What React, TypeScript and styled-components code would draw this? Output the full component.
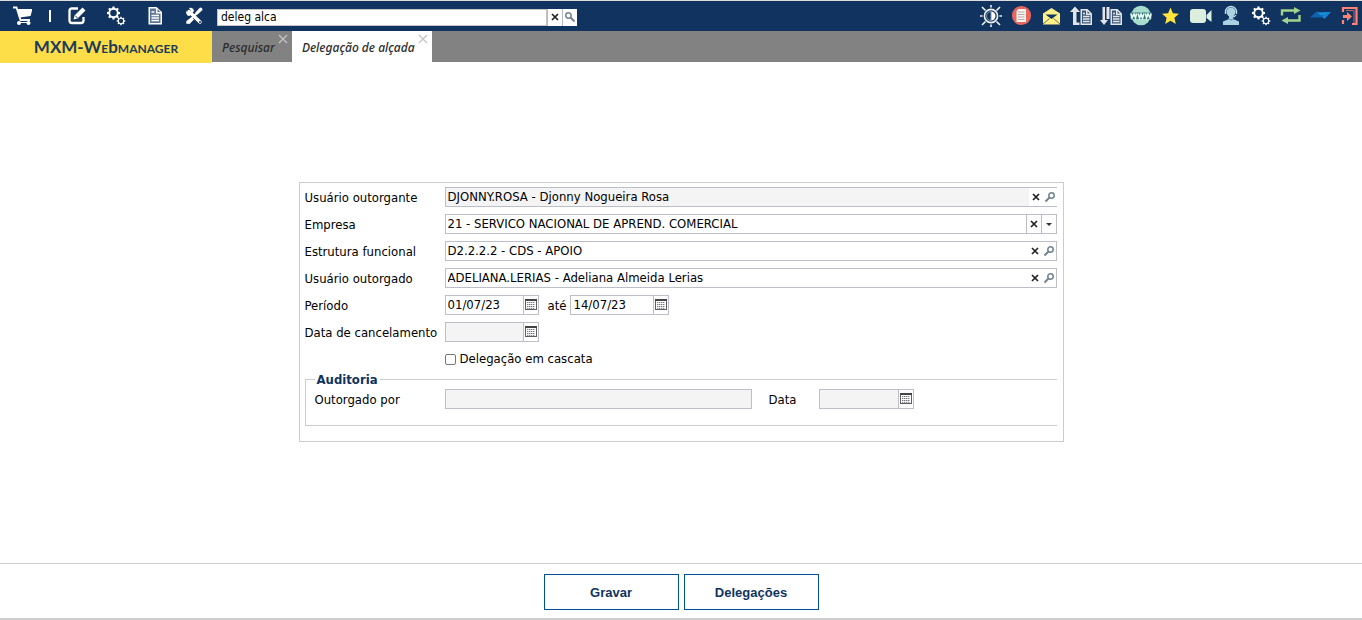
import React, { useState } from 'react';
import styled, { createGlobalStyle, css } from 'styled-components';

const NAVY = '#10335f';
const FORM_FONT = "'DejaVu Sans Condensed', 'DejaVu Sans', sans-serif";

const GlobalStyle = createGlobalStyle`
  *, *::before, *::after { box-sizing: border-box; }
  body { margin: 0; background: #fff; color: #000; font: 13px/20px ${FORM_FONT}; }
  button, input { font: inherit; color: inherit; margin: 0; }
  button { cursor: pointer; }
`;

const Page = styled.div`
  display: flex;
  flex-direction: column;
  min-height: 100vh;
`;

const TopBar = styled.header`
  display: flex;
  align-items: center;
  height: 31px;
  border-top: 1px solid #dcdcdc;
  background: ${NAVY};
`;

const MainTools = styled.nav`
  display: flex;
  align-items: center;
  gap: 17px;
  padding: 0 12px;
`;

const StatusTools = styled.nav`
  display: flex;
  gap: 8px;
  margin-left: auto;
`;

const ToolButton = styled.button`
  display: flex;
  align-items: center;
  justify-content: center;
  width: 22px;
  height: 22px;
  padding: 0;
  border: 0;
  background: none;
`;

const Divider = styled.span`
  width: 2px;
  height: 12px;
  margin: 0 -2px;
  background: #fff;
`;

const SearchBox = styled.form`
  display: flex;
  width: 360px;
  height: 17px;
  margin-top: 2px;
`;

const SearchInput = styled.input`
  flex: 1;
  min-width: 0;
  height: 17px;
  padding: 0 3px;
  border: 1px solid #c5c5c5;
  background: #fff;
  font-size: 12px;
  line-height: 15px;
`;

const SearchButton = styled.button`
  display: flex;
  align-items: center;
  justify-content: center;
  width: 15px;
  padding: 0;
  border: 0;
  border-left: 1px solid #b4b8d0;
  background: #fff;
`;

const TabBar = styled.div`
  display: flex;
  align-items: flex-start;
  height: 32px;
`;

const Brand = styled.a`
  display: flex;
  align-items: center;
  justify-content: center;
  width: 212px;
  height: 32px;
  background: #fddd48;
  color: #1c3c5c;
  font: bold 17px/32px Lato, sans-serif;
  font-variant-caps: small-caps;
  text-decoration: none;
`;

const BrandLower = styled.span`
  font-variant-caps: normal;
`;

const Tabs = styled.div`
  display: flex;
  flex: 1;
  height: 31px;
  background: #828282;
`;

const Tab = styled.div<{ $active?: boolean }>`
  display: flex;
  gap: 3px;
  padding: 0 4px 0 10px;
  background: ${p => (p.$active ? '#fff' : 'transparent')};
`;

const TabLabel = styled.button`
  padding: 2px 0 0;
  border: 0;
  background: none;
  color: #2b2b2b;
  font: italic 500 12px/28px 'Noto Sans', sans-serif;
`;

const TabClose = styled.button`
  display: flex;
  width: 10px;
  height: 10px;
  margin-top: 3px;
  padding: 0;
  border: 0;
  background: none;
`;

const Main = styled.main`
  display: flex;
  flex: 1;
  align-items: center;
  justify-content: center;
  padding-bottom: 2px;
`;

const Panel = styled.form`
  display: flex;
  flex-direction: column;
  width: 765px;
  max-width: 100%;
  padding: 4px 6px 15px 5px;
  border: 1px solid #ccc;
`;

const Rows = styled.div`
  display: flex;
  flex-direction: column;
  gap: 7px;
`;

const Row = styled.div`
  display: flex;
  height: 20px;
`;

const Label = styled.label<{ $width: number }>`
  flex: none;
  width: ${p => p.$width}px;
  height: 20px;
  line-height: 22px;
  white-space: nowrap;
`;

const Field = styled.div<{ $open?: boolean; $width?: number }>`
  display: flex;
  ${p => (p.$width ? css`flex: none; width: ${p.$width}px;` : css`flex: 1;`)}
  height: 20px;
  border: 1px solid #bcbec8;
  ${p => p.$open && css`border-right: 0;`}
  background: #fff;
`;

const FieldInput = styled.input<{ $readOnly?: boolean }>`
  flex: 1;
  min-width: 0;
  height: 18px;
  padding: 0 2px;
  border: 0;
  background: ${p => (p.$readOnly ? '#f4f4f4' : '#fff')};
  line-height: 18px;
`;

const FieldButton = styled.button<{ $divided?: boolean }>`
  display: flex;
  align-items: center;
  justify-content: center;
  width: ${p => (p.$divided ? 15 : 14)}px;
  padding: 0;
  border: 0;
  ${p => p.$divided && css`border-left: 1px solid #bcbec8;`}
  background: #fff;
`;

const CheckLabel = styled.label`
  display: flex;
  align-items: center;
  gap: 4px;
  margin-left: 140px;
`;

const Check = styled.input`
  appearance: none;
  width: 11px;
  height: 11px;
  border: 1px solid #767676;
  border-radius: 2px;
  background: #fff;
  &:checked { background: ${NAVY}; }
`;

const Between = styled.span`
  padding: 0 4px 0 9px;
  line-height: 22px;
`;

const Audit = styled.fieldset`
  display: flex;
  min-width: 0;
  margin: 0;
  padding: 0 0 16px 9px;
  border: 1px solid #ccc;
  border-right: 0;
`;

const Legend = styled.legend`
  height: 20px;
  padding: 0 2px;
  color: #10335f;
  font-weight: bold;
  line-height: 22px;
`;

const AuditDate = styled.div`
  display: flex;
  margin-left: 17px;
`;

const Footer = styled.footer`
  display: flex;
  justify-content: center;
  gap: 5px;
  padding: 10px 0 8px;
  border-top: 1px solid #ccc;
  border-bottom: 2px solid #ccc;
`;

const ActionButton = styled.button`
  width: 135px;
  height: 36px;
  padding: 2px 0 0;
  border: 1px solid #005294;
  background: #fff;
  color: #10335f;
  font: bold 13px/16px 'Liberation Sans', Arial, sans-serif;
`;

const gearPath = (cx: number, cy: number, r: number, teeth: number) => {
  const pts: string[] = [];
  for (let i = 0; i < teeth; i++) {
    [[-0.3, 0.78], [-0.2, 1], [0.2, 1], [0.3, 0.78]].forEach(([o, k]) => {
      const a = ((i + o) * 2 * Math.PI) / teeth;
      pts.push(`${(cx + Math.cos(a) * r * k).toFixed(2)} ${(cy + Math.sin(a) * r * k).toFixed(2)}`);
    });
  }
  const h = r * 0.5;
  return `M${pts.join('L')}ZM${cx - h} ${cy}a${h} ${h} 0 1 0 ${2 * h} 0a${h} ${h} 0 1 0 ${-2 * h} 0Z`;
};

const Svg = ({ children, size = 22 }: { children: React.ReactNode; size?: number }) => (
  <svg width={size} height={size} viewBox={`0 0 ${size} ${size}`} aria-hidden="true">{children}</svg>
);

const CartIcon = () => (
  <Svg>
    <path d="M1 2.500h3.500l4 12.500H18" fill="none" stroke="#fff" strokeWidth="1.800" />
    <path d="M5 4h15v2l-1.500 5L8 12.500z" fill="#fff" />
    <circle cx="7" cy="18" r="2" fill="#fff" />
    <circle cx="16.500" cy="18" r="2" fill="#fff" />
    <path d="M7 17.500h9" stroke="#fff" />
  </Svg>
);
const EditIcon = () => (
  <Svg>
    <path d="M12 3.500H6q-2.500 0-2.500 2.500v9.500q0 2.500 2.500 2.500h9q2.500 0 2.500-2.500V12" fill="none" stroke="#fff" strokeWidth="2.300" />
    <path d="M7.500 14.500l1-4L16.500 2.600l3 3L11.500 13.500z" fill="#fff" />
    <path d="M9 10.500l2.500 2.500" stroke={NAVY} />
  </Svg>
);
const GearsIcon = () => (
  <Svg>
    <path fill="#fff" fillRule="evenodd" d={gearPath(8.5, 8, 6.6, 8)} />
    <path fill="#fff" fillRule="evenodd" d={gearPath(16, 16, 4.3, 8)} />
  </Svg>
);
const PageIcon = () => (
  <Svg>
    <path d="M4.500 2h8l5.500 5v12.500H4.500z" fill="#fff" />
    <path d="M6 3.500h6v5h4.500V18H6zM13.500 4v3h3z" fill="#5d7594" />
    <path d="M7.500 7h3M7.500 10.500h7.500M7.500 13h7.500M7.500 15.500h7.500" stroke="#fff" strokeWidth="1.500" />
  </Svg>
);
const ToolsIcon = () => (
  <Svg>
    <path d="M6 6.500l11 10.500" stroke="#fff" strokeWidth="3.400" strokeLinecap="round" />
    <path d="M3 6l3 2 2-2-2-3q4-1 5 3l-4.500 5Q3 11 3 6z" fill="#fff" />
    <path d="M19 3l-2-.5-5 5.500 2 2 5.500-5z" fill="#fff" />
    <path d="M14 8l-5 5" stroke="#fff" strokeWidth="2" />
    <path d="M8.500 12l2.500 2.500-4.500 4.500-3.500-.5.500-2.500z" fill="#fff" />
    <circle cx="17" cy="17" r="1" fill={NAVY} />
  </Svg>
);
const ContrastIcon = () => (
  <Svg>
    <g stroke="#f2f4f6" fill="none" strokeWidth="1.600">
      <circle cx="11" cy="11" r="6.600" />
      <path d="M11 0v2.500M11 19.500V22M0 11h2.500M19.500 11H22M2 2l3.500 3.500M20 2l-3.500 3.500M2 20l3.500-3.500M20 20l-3.500-3.500" />
    </g>
    <path d="M11 6.500a4.500 4.500 0 0 1 0 9z" fill="#fff" />
    <path d="M11 6.500a4.500 4.500 0 0 0 0 9z" fill="none" stroke="#8396ad" />
  </Svg>
);
const ReportIcon = () => (
  <Svg>
    <circle cx="11.500" cy="10.500" r="9.600" fill="#e9665c" />
    <path d="M8.500 4H16v13H6.500V6z" fill="#f7f3ef" />
    <path d="M8 7h6.500M8 9.500h6.500M8 12h6.500M8 14.500h6.500" stroke="#b5aba6" />
  </Svg>
);
const MailIcon = () => (
  <Svg>
    <path d="M3 8.500L11.500 3 20 8.500V19.500H3z" fill="#fff08a" />
    <path d="M5.500 9.500h12L11.500 14z" fill={NAVY} />
    <path d="M3 19l6.500-5.500M20 19l-6.500-5.500" fill="none" stroke="#6f714f" />
  </Svg>
);
const SheetShape = () => (
  <>
    <path d="M10.500 4h7L22 8.500V20H10.500z" fill="#e2e5e8" />
    <path d="M12 5.500h4V10h4.500v8.500H12zM17.500 6v2.500H20z" fill="#3d587a" />
    <path d="M13 8.500h2M13 11.500h6.500M13 14h6.500M13 16.500h6.500" stroke="#e2e5e8" strokeWidth="1.400" />
  </>
);
const UploadIcon = () => (
  <Svg>
    <SheetShape />
    <path d="M5 1.500L0 7h3v13h6.500v-2.500H6.500V7H10z" fill="#e2e5e8" />
  </Svg>
);
const DownloadIcon = () => (
  <Svg>
    <SheetShape />
    <path d="M2.500 2H5v13h3L4 20 0 15h2.500zM6.500 2h3v12h-3z" fill="#e2e5e8" />
  </Svg>
);
const WebIcon = () => (
  <Svg>
    <circle cx="11" cy="10.500" r="9.800" fill="#a5dccb" />
    <path d="M0 7.500h22v6.500H0z" fill="#3b6f7c" />
    <path d="M1 8.500l1 4.500 2-4 1.500 4 1-4.500M8 8.500l1.500 4.500L11 9l1.500 4L14 8.500M15.500 8.500l1 4.500 1.500-4 2 4 1-4.500" fill="none" stroke="#e2fff4" strokeWidth="1.600" />
  </Svg>
);
const StarIcon = () => (
  <Svg><path d="M10.500 2.500l2.400 5.700 6.100.500-4.600 4.100 1.400 6.200-5.300-3.300L5.200 19l1.400-6.200L2 8.700l6.100-.500z" fill="#ffe43c" /></Svg>
);
const CameraIcon = () => (
  <Svg>
    <rect x="0" y="4" width="16" height="14" rx="3" fill="#dceedd" />
    <path d="M16.500 10L21.500 5v12L16.500 13z" fill="#dceedd" />
  </Svg>
);
const SupportIcon = () => (
  <Svg>
    <circle cx="11" cy="7" r="4.500" fill="#a9d2e3" />
    <path d="M5.500 9V7a5.500 5.500 0 0 1 11 0v2M16 10q-1 2-4 2" fill="none" stroke="#b9dbea" strokeWidth="1.400" />
    <path d="M9 11h4v3l6 2.500V20H3v-3.500L9 14z" fill="#a9d2e3" />
    <path d="M8 13.500l3 1.500 3-1.500" fill="none" stroke="#5d8faa" />
  </Svg>
);
const SwapIcon = () => (
  <Svg>
    <path d="M2 10.500V5.500h13M19.500 10v5.500H7" fill="none" stroke="#a2d28c" strokeWidth="2.400" />
    <path d="M14 2l6.500 3.500L14 9zM8 12l-6.500 3.500L8 19z" fill="#a2d28c" />
  </Svg>
);
const WingIcon = () => (
  <Svg>
    <path d="M6 7h15l-6.500 7z" fill="#1583d2" />
    <path d="M6 7h8l-2 5.500H0z" fill="#0e63ad" />
    <path d="M7 7.500h12l-8 3z" fill="#1c8ddb" />
  </Svg>
);
const ExitIcon = () => (
  <Svg>
    <path d="M3 7V3h13.500v16H12M3 15v4" fill="none" stroke="#ff8272" strokeWidth="2.200" />
    <path d="M3 10h4V7l5 4.500L7 16v-3H3z" fill="#ff8272" />
    <path d="M6 5.500h8V18" fill="none" stroke="#b9636a" />
  </Svg>
);
const CrossIcon = () => (
  <Svg size={8}><path d="M1 1l6 6M7 1L1 7" stroke="#222" strokeWidth="1.700" /></Svg>
);
const LightCrossIcon = () => (
  <Svg size={10}><path d="M1 1l8 8M9 1L1 9" stroke="#c4c4c4" strokeWidth="1.300" /></Svg>
);
const LensIcon = ({ flip }: { flip?: boolean }) => (
  <Svg size={12}>
    <g transform={flip ? 'translate(12 0) scale(-1 1)' : undefined} fill="none" stroke="#71838f">
      <circle cx="7.500" cy="4.500" r="2.700" strokeWidth="1.500" />
      <path d="M5.500 6.500L1.500 10.500" strokeWidth="2" />
    </g>
  </Svg>
);
const ArrowIcon = () => (
  <Svg size={8}><path d="M1 3h6L4 6z" fill="#333" /></Svg>
);
const CalendarIcon = () => (
  <Svg size={12}>
    <rect x=".5" y=".5" width="11" height="10" fill="#fff" stroke="#5f5c62" />
    <path d="M0 1h12" stroke="#444" strokeWidth="2" />
    <path d="M2 3.500h8M2 5.500h8M2 7.500h8M2 9.300h8" stroke="#77757c" strokeDasharray="1.400 .600" />
  </Svg>
);

const mainTools: [string, React.FC][] = [
  ['Editar', EditIcon], ['Processos', GearsIcon], ['Relatórios', PageIcon], ['Ferramentas', ToolsIcon],
];
const statusTools: [string, React.FC][] = [
  ['Contraste', ContrastIcon], ['Relatório', ReportIcon], ['Mensagens', MailIcon], ['Enviar', UploadIcon],
  ['Receber', DownloadIcon], ['Web', WebIcon], ['Favoritos', StarIcon], ['Vídeos', CameraIcon],
  ['Suporte', SupportIcon], ['Configurações', GearsIcon], ['Trocar', SwapIcon], ['MXM', WingIcon], ['Sair', ExitIcon],
];

const LookupRow = ({ id, label, initial, readOnly, combo }: {
  id: string; label: string; initial: string; readOnly?: boolean; combo?: boolean;
}) => {
  const [value, setValue] = useState(initial);
  return (
    <Row>
      <Label $width={140} htmlFor={id}>{label}</Label>
      <Field $open={readOnly}>
        <FieldInput id={id} $readOnly={readOnly} readOnly={readOnly} value={value} onChange={e => setValue(e.target.value)} />
        <FieldButton type="button" $divided={combo} aria-label={`Limpar ${label}`} onClick={() => setValue('')}><CrossIcon /></FieldButton>
        <FieldButton type="button" $divided={combo} aria-label={`Abrir ${label}`}>{combo ? <ArrowIcon /> : <LensIcon />}</FieldButton>
      </Field>
    </Row>
  );
};

const DateField = ({ id, label, initial = '', readOnly, width }: {
  id: string; label?: string; initial?: string; readOnly?: boolean; width: number;
}) => {
  const [value, setValue] = useState(initial);
  return (
    <Field $width={width}>
      <FieldInput id={id} aria-label={label} $readOnly={readOnly} readOnly={readOnly} value={value} onChange={e => setValue(e.target.value)} />
      <FieldButton type="button" $divided aria-label="Calendário"><CalendarIcon /></FieldButton>
    </Field>
  );
};

export default function App() {
  const [query, setQuery] = useState('deleg alca');
  return (
    <Page>
      <GlobalStyle />
      <TopBar>
        <MainTools aria-label="Principal">
          <ToolButton aria-label="Compras"><CartIcon /></ToolButton>
          <Divider />
          {mainTools.map(([name, Icon]) => (
            <ToolButton key={name} aria-label={name}><Icon /></ToolButton>
          ))}
        </MainTools>
        <SearchBox onSubmit={e => e.preventDefault()}>
          <SearchInput aria-label="Pesquisa" value={query} onChange={e => setQuery(e.target.value)} />
          <SearchButton type="button" aria-label="Limpar" onClick={() => setQuery('')}><CrossIcon /></SearchButton>
          <SearchButton type="submit" aria-label="Pesquisar"><LensIcon flip /></SearchButton>
        </SearchBox>
        <StatusTools aria-label="Atalhos">
          {statusTools.map(([name, Icon]) => (
            <ToolButton key={name} aria-label={name}><Icon /></ToolButton>
          ))}
        </StatusTools>
      </TopBar>
      <TabBar>
        <Brand href="#"><span>MXM-We<BrandLower>b</BrandLower>manager</span></Brand>
        <Tabs>
          <Tab>
            <TabLabel>Pesquisar</TabLabel>
            <TabClose aria-label="Fechar Pesquisar"><LightCrossIcon /></TabClose>
          </Tab>
          <Tab $active>
            <TabLabel>Delegação de alçada</TabLabel>
            <TabClose aria-label="Fechar Delegação de alçada"><LightCrossIcon /></TabClose>
          </Tab>
        </Tabs>
      </TabBar>
      <Main>
        <Panel id="delegacao" onSubmit={e => e.preventDefault()}>
          <Rows>
            <LookupRow id="outorgante" label="Usuário outorgante" initial="DJONNY.ROSA - Djonny Nogueira Rosa" readOnly />
            <LookupRow id="empresa" label="Empresa" initial="21 - SERVICO NACIONAL DE APREND. COMERCIAL" combo />
            <LookupRow id="estrutura" label="Estrutura funcional" initial="D2.2.2.2 - CDS - APOIO" />
            <LookupRow id="outorgado" label="Usuário outorgado" initial="ADELIANA.LERIAS - Adeliana Almeida Lerias" />
            <Row>
              <Label $width={140} htmlFor="inicio">Período</Label>
              <DateField id="inicio" initial="01/07/23" width={94} />
              <Between>até</Between>
              <DateField id="fim" label="Fim do período" initial="14/07/23" width={99} />
            </Row>
            <Row>
              <Label $width={140} htmlFor="cancelamento">Data de cancelamento</Label>
              <DateField id="cancelamento" readOnly width={94} />
            </Row>
            <Row>
              <CheckLabel><Check type="checkbox" />Delegação em cascata</CheckLabel>
            </Row>
          </Rows>
          <Audit>
            <Legend>Auditoria</Legend>
            <Label $width={130} htmlFor="outorgado-por">Outorgado por</Label>
            <Field $width={307}><FieldInput id="outorgado-por" $readOnly readOnly value="" /></Field>
            <AuditDate>
              <Label $width={50} htmlFor="data">Data</Label>
              <DateField id="data" readOnly width={95} />
            </AuditDate>
          </Audit>
        </Panel>
      </Main>
      <Footer>
        <ActionButton type="submit" form="delegacao">Gravar</ActionButton>
        <ActionButton type="button">Delegações</ActionButton>
      </Footer>
    </Page>
  );
}
